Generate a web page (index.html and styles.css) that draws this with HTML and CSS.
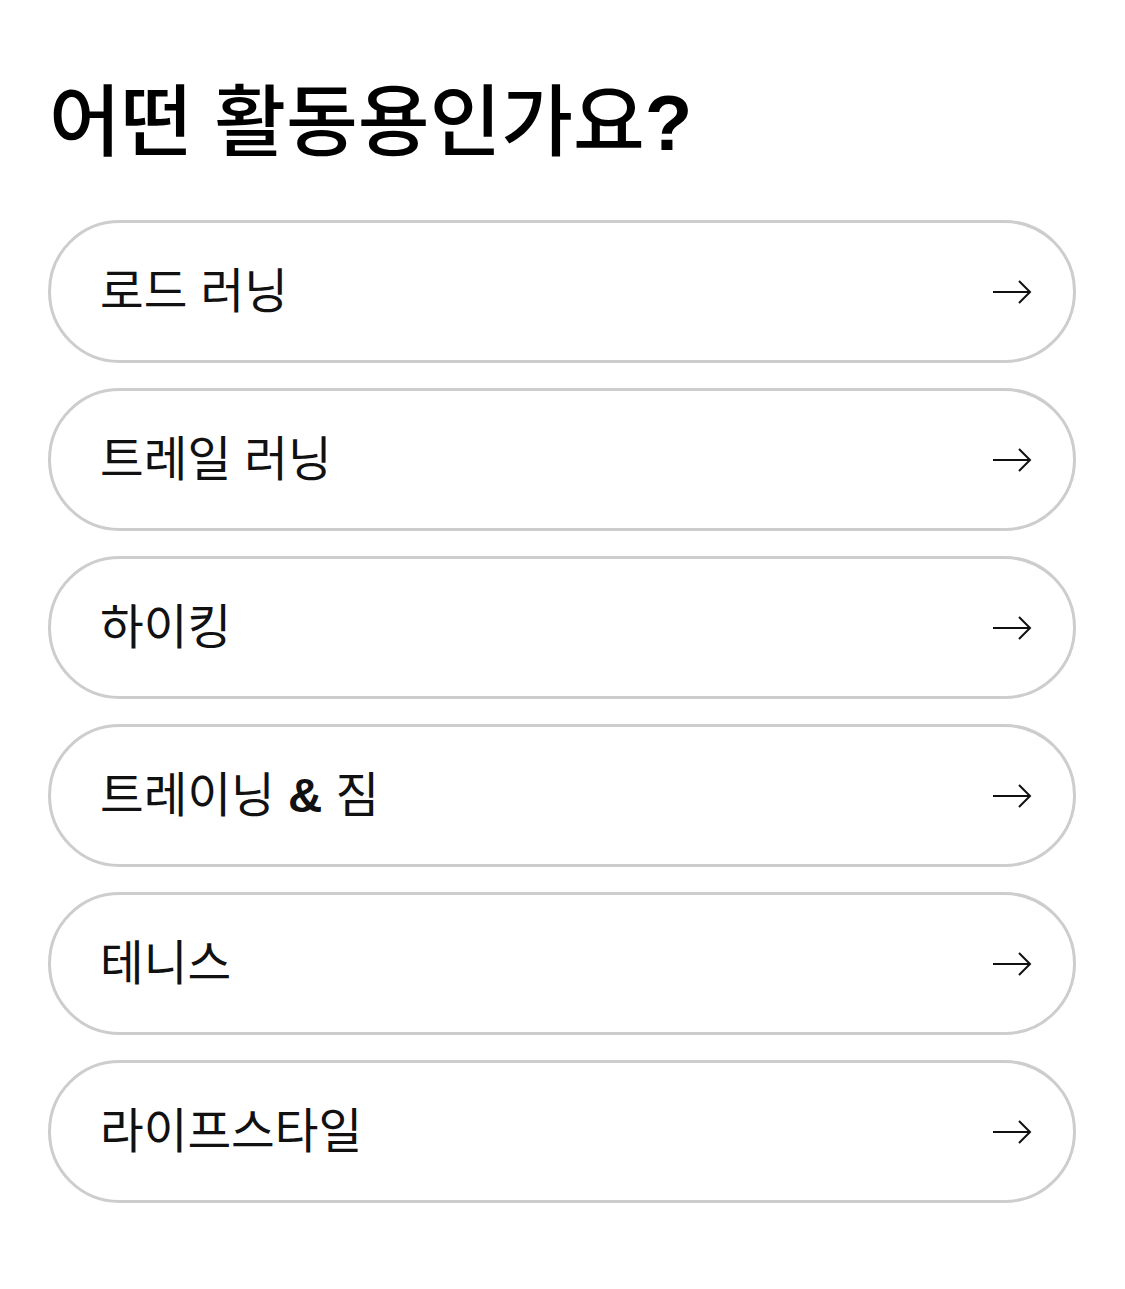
FILE: index.html
```html
<!DOCTYPE html>
<html lang="ko">

<head>
    <meta charset="UTF-8">
    <meta name="viewport" content="width=device-width, initial-scale=1.0">
    <title>활동 선택</title>
    <link rel="stylesheet" href="styles.css">
</head>

<body>
    <div class="wrap">
        <h1 class="title">어떤 활동용인가요<b class="mark">?</b></h1>

        <div class="option-list">
            <a href="#" class="option">
                <span>로드 러닝</span>
                <svg class="arrow" viewBox="0 0 40 24"><path d="M1 12H38M27 1L38 12L27 23" /></svg>
            </a>
            <a href="#" class="option">
                <span>트레일 러닝</span>
                <svg class="arrow" viewBox="0 0 40 24"><path d="M1 12H38M27 1L38 12L27 23" /></svg>
            </a>
            <a href="#" class="option">
                <span>하이킹</span>
                <svg class="arrow" viewBox="0 0 40 24"><path d="M1 12H38M27 1L38 12L27 23" /></svg>
            </a>
            <a href="#" class="option">
                <span>트레이닝 <b class="amp">&amp;</b> 짐</span>
                <svg class="arrow" viewBox="0 0 40 24"><path d="M1 12H38M27 1L38 12L27 23" /></svg>
            </a>
            <a href="#" class="option">
                <span>테니스</span>
                <svg class="arrow" viewBox="0 0 40 24"><path d="M1 12H38M27 1L38 12L27 23" /></svg>
            </a>
            <a href="#" class="option">
                <span>라이프스타일</span>
                <svg class="arrow" viewBox="0 0 40 24"><path d="M1 12H38M27 1L38 12L27 23" /></svg>
            </a>
        </div>
    </div>
</body>

</html>
```

FILE: styles.css
```css
* {
    padding: 0;
    margin: 0;
    box-sizing: border-box;
}

body {
    background-color: #fff;
    color: #111;
    font-family: "Liberation Sans", "Noto Sans CJK KR", sans-serif;
}

.wrap {
    padding: 78px 49px 80px 48px;
}

.title {
    font-size: 78px;
    line-height: 90px;
    font-weight: 500;
    color: #000;
    margin: 0 0 52px;
    padding-left: 1px;
}

/* 물음표만 굵게 */
.title .mark {
    font-weight: 700;
}

.option-list {
    display: flex;
    flex-direction: column;
    gap: 25px;
}

.option {
    display: flex;
    justify-content: space-between;
    align-items: center;
    height: 143px;
    padding: 0 41px 8px 49px;
    border: 3px solid #cdcdcd;
    border-radius: 72px;
    text-decoration: none;
    color: #111;
    font-size: 47.5px;
}

/* & 는 굵게 */
.amp {
    font-weight: 700;
}

.arrow {
    width: 40px;
    height: 24px;
    margin-top: 8px;
    fill: none;
    stroke: #111;
    stroke-width: 2;
}
```
